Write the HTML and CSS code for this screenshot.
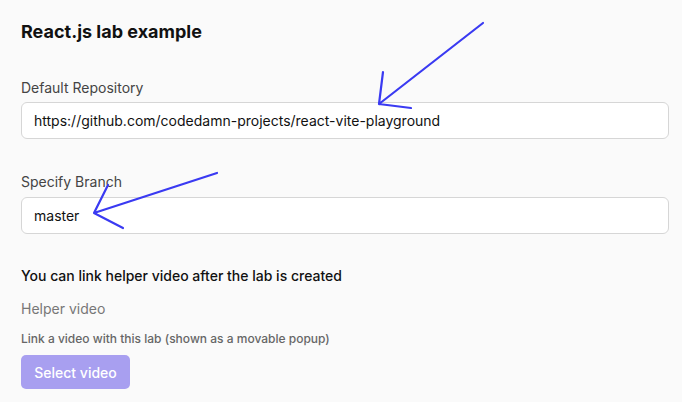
FILE: index.html
```html
<!DOCTYPE html>
<html>
<head>
<meta charset="utf-8">
<link rel="stylesheet" href="styles.css">
</head>
<body>
<div class="page">
  <h1 class="title">React.js lab example</h1>
  <div class="field field-repo">
    <label class="label">Default Repository</label>
    <div class="input">https://github.com/codedamn-projects/react-vite-playground</div>
  </div>
  <div class="field field-branch">
    <label class="label">Specify Branch</label>
    <div class="input">master</div>
  </div>
  <p class="note">You can link helper video after the lab is created</p>
  <div class="helper-label">Helper video</div>
  <div class="helper-desc">Link a video with this lab (shown as a movable popup)</div>
  <button class="btn">Select video</button>
  <svg class="arrows" width="682" height="402" viewBox="0 0 682 402">
    <g fill="none" stroke="#3a3af2" stroke-width="2.2" stroke-linecap="round" stroke-linejoin="round">
      <path d="M483 23 L379 104 M383 72 L379 104 L411 108"/>
      <path d="M217 173 L94 213 M108 185 L94 213 L123 228"/>
    </g>
  </svg>
</div>
</body>
</html>
```
FILE: styles.css
```css
html, body {
  margin: 0;
  padding: 0;
  background: #fafafa;
}
body {
  font-family: Inter, "Noto Sans", sans-serif;
  color: #111;
}
.page {
  position: relative;
  width: 682px;
  height: 402px;
  overflow: hidden;
  box-sizing: border-box;
  padding: 20px 13px 0 21px;
  display: flex;
  flex-direction: column;
}
.title {
  margin: 0;
  font-size: 18px;
  font-weight: 700;
  line-height: 24px;
  color: #111;
}
.field {
  display: flex;
  flex-direction: column;
}
.field-repo { margin-top: 34px; }
.field-branch { margin-top: 33px; }
.label {
  font-size: 14px;
  line-height: 20px;
  color: #444;
  margin-bottom: 4px;
}
.field-branch .label { margin-bottom: 5px; }
.input {
  height: 37px;
  box-sizing: border-box;
  border: 1px solid #d6d6d6;
  border-radius: 6px;
  background: #fff;
  padding: 0 12px;
  display: flex;
  align-items: center;
  font-size: 14px;
  color: #111;
}
.note {
  margin: 32px 0 0;
  font-size: 14px;
  font-weight: 500;
  line-height: 20px;
  color: #111;
}
.helper-label {
  margin-top: 13px;
  font-size: 14px;
  line-height: 20px;
  color: #777;
}
.helper-desc {
  margin-top: 12px;
  font-size: 12px;
  font-weight: 500;
  line-height: 16px;
  color: #666;
}
.btn {
  margin-top: 8px;
  align-self: flex-start;
  width: 109px;
  height: 34px;
  border: none;
  border-radius: 5px;
  background: #a89ff0;
  color: #fff;
  font-family: Inter, "Noto Sans", sans-serif;
  font-size: 14px;
  font-weight: 500;
  padding: 0;
}
.arrows {
  position: absolute;
  left: 0;
  top: 0;
  pointer-events: none;
}
```
